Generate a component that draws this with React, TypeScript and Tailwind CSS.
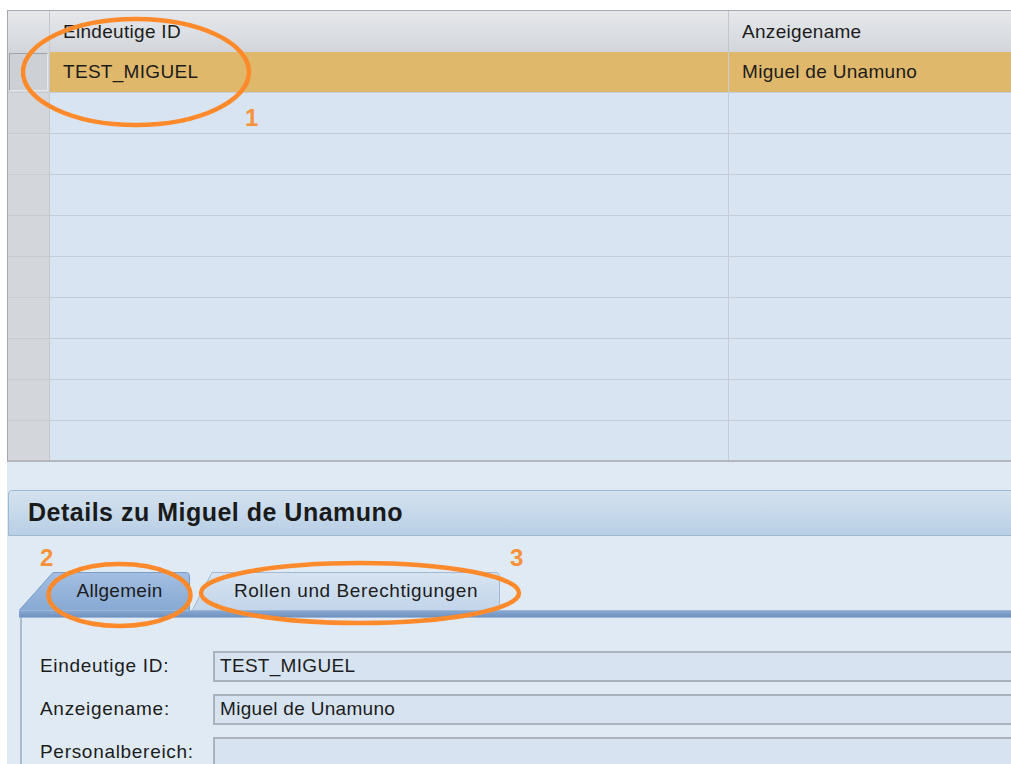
import React from "react";

const rows = Array.from({ length: 10 }, (_, i) => i);

function TabShape({ w, slant, active }: { w: number; slant: number; active: boolean }) {
  const id = active ? "tabActive" : "tabIdle";
  return (
    <svg className="absolute inset-0" width={w} height={38} viewBox={`0 0 ${w} 38`}>
      <defs>
        <linearGradient id={id} x1="0" y1="0" x2="0" y2="1">
          {active ? (
            <>
              <stop offset="0" stopColor="#a3bfe2" />
              <stop offset="1" stopColor="#87a9d3" />
            </>
          ) : (
            <>
              <stop offset="0" stopColor="#d6e3f1" />
              <stop offset="1" stopColor="#c3d5ea" />
            </>
          )}
        </linearGradient>
      </defs>
      <path
        d={`M0.5,38 L${slant},0.5 L${w - 4},0.5 Q${w - 0.5},0.5 ${w - 0.5},4 L${w - 0.5},38`}
        fill={`url(#${id})`}
        stroke={active ? "#7c9cc4" : "#a3b9d3"}
        strokeWidth="1"
      />
    </svg>
  );
}

export default function App() {
  return (
    <div className="relative w-[1011px] h-[764px] overflow-hidden bg-white pt-[10px] pl-[7px] font-['Liberation_Sans',Arial,sans-serif] text-[19px] tracking-[0.3px] text-[#1c1c1c]">
      <div className="flex flex-col w-[1100px] h-[800px] bg-[#dfeaf4]">
        {/* user table */}
        <div className="shrink-0 border-t border-l border-[#a6aaae] bg-[#d9e4f2]">
          <div className="flex h-[41px] bg-gradient-to-b from-[#e6e8eb] to-[#d2d6db]">
            <div className="w-[42px] border-r border-[#c3c7cc]" />
            <div className="w-[679px] border-r border-[#c3c7cc] flex items-center pl-[13px] pt-[2px]">Eindeutige ID</div>
            <div className="flex-1 flex items-center pl-[13px] pt-[2px]">Anzeigename</div>
          </div>
          {rows.map((i) => {
            const sel = i === 0;
            return (
              <div
                key={i}
                className={`flex h-[41px] ${i === rows.length - 1 ? "border-b-2 border-[#b3b7bc]" : "border-b border-[#c4ccd6]"} ${sel ? "bg-[#e0b86b]" : "bg-[#d9e4f2]"}`}
              >
                <div className="w-[42px] bg-[#d3d6db] border-r border-[#c3c7cc] p-[1px]">
                  {sel && <div className="h-full w-[39px] bg-[#cdd1d6] border border-t-[#9ea3a9] border-l-[#9ea3a9] border-r-[#e4e6e9] border-b-[#e4e6e9]" />}
                </div>
                <div className="w-[679px] border-r border-[#c6cdd6] flex items-center pl-[13px]">{sel ? "TEST_MIGUEL" : ""}</div>
                <div className="flex-1 flex items-center pl-[13px]">{sel ? "Miguel de Unamuno" : ""}</div>
              </div>
            );
          })}
        </div>

        {/* details header */}
        <div className="shrink-0 mt-[28px] ml-[1px] h-[46px] rounded-tl-[4px] border border-[#9fb8d2] bg-gradient-to-b from-[#d4e2ef] to-[#b9cfe6] flex items-center pl-[19px] text-[25px] font-bold tracking-[0.5px] text-[#1a1a1a]">
          Details zu Miguel de Unamuno
        </div>

        {/* tabs */}
        <div className="shrink-0 mt-[36px] h-[38px] flex pl-[12px]">
          <div className="relative w-[171px] h-[38px]">
            <TabShape w={171} slant={34} active />
            <div className="relative h-full flex items-center justify-center pl-[34px] pr-[4px]">Allgemein</div>
          </div>
          <div className="relative ml-[2px] w-[308px] h-[38px]">
            <TabShape w={308} slant={20} active={false} />
            <div className="relative h-full flex items-center justify-center pl-[20px] tracking-[0.6px]">Rollen und Berechtigungen</div>
          </div>
        </div>
        <div className="shrink-0 ml-[12px] h-[8px] border-t border-b border-[#9bb6d6] bg-gradient-to-b from-[#86a7d0] to-[#6f92bf]" />

        {/* general tab content */}
        <div className="ml-[13px] flex-1 border-l-2 border-[#a8bbd0] pt-[33px] pl-[18px] flex flex-col gap-[12px]">
          {[
            ["Eindeutige ID:", "TEST_MIGUEL"],
            ["Anzeigename:", "Miguel de Unamuno"],
            ["Personalbereich:", ""],
          ].map(([label, value]) => (
            <div key={label} className="shrink-0 flex items-center h-[31px]">
              <div className="w-[173px] shrink-0 tracking-[0.7px]">{label}</div>
              <div className="flex-1 h-[31px] border-2 border-[#aab2bd] bg-[#d7e3f1] flex items-center pl-[5px]">{value}</div>
            </div>
          ))}
        </div>
      </div>

      {/* callout markers */}
      <svg className="pointer-events-none absolute inset-0" width={1011} height={764}>
        <g fill="none" stroke="#ff8a2c" strokeWidth="4.5">
          <ellipse cx="136" cy="72" rx="113" ry="53" />
          <ellipse cx="119.5" cy="595" rx="71" ry="31" />
          <ellipse cx="360" cy="593" rx="159" ry="30" />
        </g>
      </svg>
      <span className="absolute left-[245px] top-[106px] text-[24px] font-bold text-[#f7913a] leading-none tracking-normal">1</span>
      <span className="absolute left-[40px] top-[546px] text-[24px] font-bold text-[#f7913a] leading-none tracking-normal">2</span>
      <span className="absolute left-[510px] top-[546px] text-[24px] font-bold text-[#f7913a] leading-none tracking-normal">3</span>
    </div>
  );
}
